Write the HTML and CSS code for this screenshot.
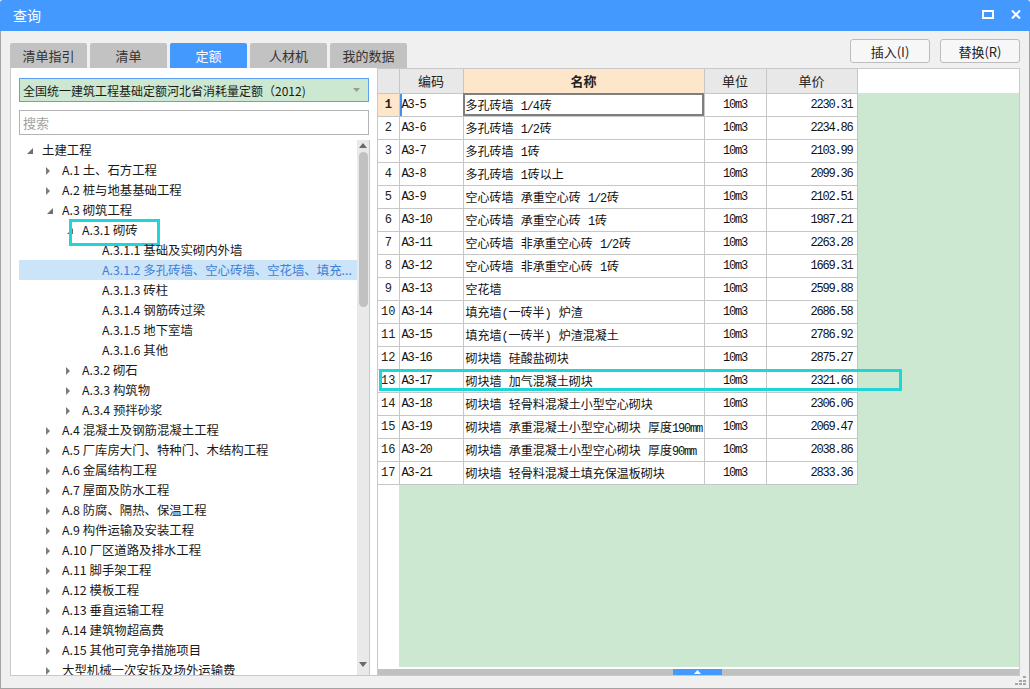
FILE: index.html
```html
<!DOCTYPE html>
<html lang="zh-CN">
<head>
<meta charset="utf-8">
<title>查询</title>
<link rel="stylesheet" href="styles.css">
</head>
<body>
<div class="window">
  <div class="titlebar">
    <span class="title">查询</span>
    <div class="tb-icons">
      <svg class="ico-max" width="12" height="9" viewBox="0 0 12 9"><rect x="1" y="1" width="10" height="7" fill="none" stroke="#fff" stroke-width="2"/></svg>
      <svg class="ico-close" width="10" height="9" viewBox="0 0 10 9"><path d="M1 0.5 L9 8.5 M9 0.5 L1 8.5" stroke="#fff" stroke-width="2"/></svg>
    </div>
  </div>
  <div class="body">
    <div class="topbar">
      <div class="tabs">
        <div class="tab">清单指引</div>
        <div class="tab">清单</div>
        <div class="tab active">定额</div>
        <div class="tab">人材机</div>
        <div class="tab">我的数据</div>
      </div>
      <div class="actions">
        <button class="btn">插入(I)</button>
        <button class="btn">替换(R)</button>
      </div>
    </div>
    <div class="main">
      <div class="leftpanel">
        <div class="combo">
          <span class="combo-text">全国统一建筑工程基础定额河北省消耗量定额（2012)</span>
          <svg class="combo-arrow" width="7" height="4" viewBox="0 0 7 4"><polygon points="0,0 7,0 3.5,4" fill="#9a9a9a"/></svg>
        </div>
        <div class="search">搜索</div>
        <div class="treebox">
          <div class="tree">
            <div class="node l0"><i class="tw"><svg width="6" height="6" viewBox="0 0 6 6"><polygon points="6,0 6,6 0,6" fill="#6e6e6e"/></svg></i><span class="lbl">土建工程</span></div>
            <div class="node l1"><i class="tw c"><svg width="5" height="8" viewBox="0 0 5 8"><polygon points="0,0 4,4 0,8" fill="#7c7c7c"/></svg></i><span class="lbl">A.1 土、石方工程</span></div>
            <div class="node l1"><i class="tw c"><svg width="5" height="8" viewBox="0 0 5 8"><polygon points="0,0 4,4 0,8" fill="#7c7c7c"/></svg></i><span class="lbl">A.2 桩与地基基础工程</span></div>
            <div class="node l1"><i class="tw"><svg width="6" height="6" viewBox="0 0 6 6"><polygon points="6,0 6,6 0,6" fill="#6e6e6e"/></svg></i><span class="lbl">A.3 砌筑工程</span></div>
            <div class="node l2 boxed"><i class="tw"><svg width="6" height="6" viewBox="0 0 6 6"><polygon points="6,0 6,6 0,6" fill="#6e6e6e"/></svg></i><span class="lbl">A.3.1 砌砖</span></div>
            <div class="node l3"><i class="tw"></i><span class="lbl">A.3.1.1 基础及实砌内外墙</span></div>
            <div class="node l3 selected"><i class="tw"></i><span class="lbl">A.3.1.2 多孔砖墙、空心砖墙、空花墙、填充...</span></div>
            <div class="node l3"><i class="tw"></i><span class="lbl">A.3.1.3 砖柱</span></div>
            <div class="node l3"><i class="tw"></i><span class="lbl">A.3.1.4 钢筋砖过梁</span></div>
            <div class="node l3"><i class="tw"></i><span class="lbl">A.3.1.5 地下室墙</span></div>
            <div class="node l3"><i class="tw"></i><span class="lbl">A.3.1.6 其他</span></div>
            <div class="node l2"><i class="tw c"><svg width="5" height="8" viewBox="0 0 5 8"><polygon points="0,0 4,4 0,8" fill="#7c7c7c"/></svg></i><span class="lbl">A.3.2 砌石</span></div>
            <div class="node l2"><i class="tw c"><svg width="5" height="8" viewBox="0 0 5 8"><polygon points="0,0 4,4 0,8" fill="#7c7c7c"/></svg></i><span class="lbl">A.3.3 构筑物</span></div>
            <div class="node l2"><i class="tw c"><svg width="5" height="8" viewBox="0 0 5 8"><polygon points="0,0 4,4 0,8" fill="#7c7c7c"/></svg></i><span class="lbl">A.3.4 预拌砂浆</span></div>
            <div class="node l1"><i class="tw c"><svg width="5" height="8" viewBox="0 0 5 8"><polygon points="0,0 4,4 0,8" fill="#7c7c7c"/></svg></i><span class="lbl">A.4 混凝土及钢筋混凝土工程</span></div>
            <div class="node l1"><i class="tw c"><svg width="5" height="8" viewBox="0 0 5 8"><polygon points="0,0 4,4 0,8" fill="#7c7c7c"/></svg></i><span class="lbl">A.5 厂库房大门、特种门、木结构工程</span></div>
            <div class="node l1"><i class="tw c"><svg width="5" height="8" viewBox="0 0 5 8"><polygon points="0,0 4,4 0,8" fill="#7c7c7c"/></svg></i><span class="lbl">A.6 金属结构工程</span></div>
            <div class="node l1"><i class="tw c"><svg width="5" height="8" viewBox="0 0 5 8"><polygon points="0,0 4,4 0,8" fill="#7c7c7c"/></svg></i><span class="lbl">A.7 屋面及防水工程</span></div>
            <div class="node l1"><i class="tw c"><svg width="5" height="8" viewBox="0 0 5 8"><polygon points="0,0 4,4 0,8" fill="#7c7c7c"/></svg></i><span class="lbl">A.8 防腐、隔热、保温工程</span></div>
            <div class="node l1"><i class="tw c"><svg width="5" height="8" viewBox="0 0 5 8"><polygon points="0,0 4,4 0,8" fill="#7c7c7c"/></svg></i><span class="lbl">A.9 构件运输及安装工程</span></div>
            <div class="node l1"><i class="tw c"><svg width="5" height="8" viewBox="0 0 5 8"><polygon points="0,0 4,4 0,8" fill="#7c7c7c"/></svg></i><span class="lbl">A.10 厂区道路及排水工程</span></div>
            <div class="node l1"><i class="tw c"><svg width="5" height="8" viewBox="0 0 5 8"><polygon points="0,0 4,4 0,8" fill="#7c7c7c"/></svg></i><span class="lbl">A.11 脚手架工程</span></div>
            <div class="node l1"><i class="tw c"><svg width="5" height="8" viewBox="0 0 5 8"><polygon points="0,0 4,4 0,8" fill="#7c7c7c"/></svg></i><span class="lbl">A.12 模板工程</span></div>
            <div class="node l1"><i class="tw c"><svg width="5" height="8" viewBox="0 0 5 8"><polygon points="0,0 4,4 0,8" fill="#7c7c7c"/></svg></i><span class="lbl">A.13 垂直运输工程</span></div>
            <div class="node l1"><i class="tw c"><svg width="5" height="8" viewBox="0 0 5 8"><polygon points="0,0 4,4 0,8" fill="#7c7c7c"/></svg></i><span class="lbl">A.14 建筑物超高费</span></div>
            <div class="node l1"><i class="tw c"><svg width="5" height="8" viewBox="0 0 5 8"><polygon points="0,0 4,4 0,8" fill="#7c7c7c"/></svg></i><span class="lbl">A.15 其他可竞争措施项目</span></div>
            <div class="node l1"><i class="tw c"><svg width="5" height="8" viewBox="0 0 5 8"><polygon points="0,0 4,4 0,8" fill="#7c7c7c"/></svg></i><span class="lbl">大型机械一次安拆及场外运输费</span></div>
          </div>
          <div class="vscroll">
            <svg class="vs-up" width="8" height="5" viewBox="0 0 8 5"><polygon points="4,0 8,5 0,5" fill="#6a6a6a"/></svg>
            <div class="vs-thumb"></div>
            <svg class="vs-down" width="8" height="5" viewBox="0 0 8 5"><polygon points="0,0 8,0 4,5" fill="#6a6a6a"/></svg>
          </div>
        </div>
      </div>
      <div class="rightpane">
        <div class="grid">
          <table class="sheet">
            <colgroup><col class="c-no"><col class="c-code"><col class="c-name"><col class="c-unit"><col class="c-price"></colgroup>
            <thead>
              <tr><th class="no"></th><th>编码</th><th class="hl">名称</th><th>单位</th><th>单价</th></tr>
            </thead>
            <tbody>
              <tr class="cur"><td class="no">1</td><td class="code">A3-5</td><td class="name">多孔砖墙 <span class="a">1/4</span>砖</td><td class="unit">10m3</td><td class="price">2230.31</td></tr>
              <tr><td class="no">2</td><td class="code">A3-6</td><td class="name">多孔砖墙 <span class="a">1/2</span>砖</td><td class="unit">10m3</td><td class="price">2234.86</td></tr>
              <tr><td class="no">3</td><td class="code">A3-7</td><td class="name">多孔砖墙 <span class="a">1</span>砖</td><td class="unit">10m3</td><td class="price">2103.99</td></tr>
              <tr><td class="no">4</td><td class="code">A3-8</td><td class="name">多孔砖墙 <span class="a">1</span>砖以上</td><td class="unit">10m3</td><td class="price">2099.36</td></tr>
              <tr><td class="no">5</td><td class="code">A3-9</td><td class="name">空心砖墙 承重空心砖 <span class="a">1/2</span>砖</td><td class="unit">10m3</td><td class="price">2102.51</td></tr>
              <tr><td class="no">6</td><td class="code">A3-10</td><td class="name">空心砖墙 承重空心砖 <span class="a">1</span>砖</td><td class="unit">10m3</td><td class="price">1987.21</td></tr>
              <tr><td class="no">7</td><td class="code">A3-11</td><td class="name">空心砖墙 非承重空心砖 <span class="a">1/2</span>砖</td><td class="unit">10m3</td><td class="price">2263.28</td></tr>
              <tr><td class="no">8</td><td class="code">A3-12</td><td class="name">空心砖墙 非承重空心砖 <span class="a">1</span>砖</td><td class="unit">10m3</td><td class="price">1669.31</td></tr>
              <tr><td class="no">9</td><td class="code">A3-13</td><td class="name">空花墙</td><td class="unit">10m3</td><td class="price">2599.88</td></tr>
              <tr><td class="no">10</td><td class="code">A3-14</td><td class="name">填充墙<span class="a">(</span>一砖半<span class="a">)</span> 炉渣</td><td class="unit">10m3</td><td class="price">2686.58</td></tr>
              <tr><td class="no">11</td><td class="code">A3-15</td><td class="name">填充墙<span class="a">(</span>一砖半<span class="a">)</span> 炉渣混凝土</td><td class="unit">10m3</td><td class="price">2786.92</td></tr>
              <tr><td class="no">12</td><td class="code">A3-16</td><td class="name">砌块墙 硅酸盐砌块</td><td class="unit">10m3</td><td class="price">2875.27</td></tr>
              <tr><td class="no">13</td><td class="code">A3-17</td><td class="name">砌块墙 加气混凝土砌块</td><td class="unit">10m3</td><td class="price">2321.66</td></tr>
              <tr><td class="no">14</td><td class="code">A3-18</td><td class="name">砌块墙 轻骨料混凝土小型空心砌块</td><td class="unit">10m3</td><td class="price">2306.06</td></tr>
              <tr><td class="no">15</td><td class="code">A3-19</td><td class="name">砌块墙 承重混凝土小型空心砌块 厚度<span class="a">190mm</span></td><td class="unit">10m3</td><td class="price">2069.47</td></tr>
              <tr><td class="no">16</td><td class="code">A3-20</td><td class="name">砌块墙 承重混凝土小型空心砌块 厚度<span class="a">90mm</span></td><td class="unit">10m3</td><td class="price">2038.86</td></tr>
              <tr><td class="no">17</td><td class="code">A3-21</td><td class="name">砌块墙 轻骨料混凝土填充保温板砌块</td><td class="unit">10m3</td><td class="price">2833.36</td></tr>
            </tbody>
          </table>
          <div class="rowmark"></div>
        </div>
        <div class="hgap"></div>
        <div class="hscroll"><div class="hs-thumb"><svg width="7" height="4" viewBox="0 0 7 4"><polygon points="3.5,0 7,4 0,4" fill="#fff"/></svg></div></div>
      </div>
    </div>
    <div class="bottom">
      <svg class="grip" width="12" height="10" viewBox="0 0 12 10"><rect x="8" y="0" width="3" height="2" fill="#a6a6a6"/><rect x="4" y="4" width="3" height="2" fill="#a6a6a6"/><rect x="8" y="4" width="3" height="2" fill="#a6a6a6"/><rect x="0" y="7" width="3" height="2" fill="#a6a6a6"/><rect x="4" y="7" width="3" height="2" fill="#a6a6a6"/><rect x="8" y="7" width="3" height="2" fill="#a6a6a6"/></svg>
    </div>
  </div>
</div>
</body>
</html>
```

FILE: styles.css
```css
* { box-sizing: border-box; }
html, body { margin: 0; padding: 0; }
body {
  width: 1030px;
  height: 689px;
  overflow: hidden;
  background: #f0f0f0;
  font-family: "Noto Sans CJK SC", "Microsoft YaHei", sans-serif;
  font-size: 13px;
  color: #1e1e1e;
}
.window {
  width: 1030px;
  height: 689px;
  display: flex;
  flex-direction: column;
}
.titlebar {
  height: 31px;
  flex: none;
  background: #4499ff;
  color: #fff;
  display: flex;
  align-items: center;
  padding: 0 9px 0 13px;
  border-radius: 3px 3px 0 0;
}
.title { font-size: 14px; line-height: 20px; margin-top: -1px; }
.tb-icons { margin-left: auto; display: flex; align-items: center; gap: 17px; margin-top: -2px; }
.body {
  flex: 1;
  display: flex;
  flex-direction: column;
  border: 1px solid #a3a3a3;
  border-top: none;
  background: #f0f0f0;
}
.topbar {
  height: 37px;
  flex: none;
  display: flex;
  align-items: flex-end;
  padding: 0 9px;
}
.tabs { display: flex; gap: 3px; }
.tab {
  width: 77px;
  height: 25px;
  background: #c2c2c2;
  color: #333;
  text-align: center;
  line-height: 25px;
  font-size: 13px;
  border-radius: 2px 2px 0 0;
}
.tab.active { background: #4499ff; color: #fff; }
.actions { margin-left: auto; display: flex; gap: 10px; margin-bottom: 5px; }
.btn {
  width: 80px;
  height: 24px;
  background: #f7f7f7;
  border: 1px solid #bcbcbc;
  border-radius: 3px;
  font-family: "Noto Sans CJK SC", sans-serif;
  font-size: 13px;
  color: #222;
  padding: 0;
  line-height: 21px;
}
.main {
  height: 608px;
  flex: none;
  display: flex;
  margin: 0 9px;
}
.leftpanel {
  width: 367px;
  flex: none;
  background: #fff;
  border-left: 1px solid #c9c9c9;
  border-bottom: 1px solid #c9c9c9;
  padding: 10px 0 0 8px;
  display: flex;
  flex-direction: column;
}
.combo {
  width: 350px;
  height: 24px;
  flex: none;
  background: #cde8d0;
  border: 1px solid #5d9ff0;
  display: flex;
  align-items: center;
  padding: 0 8px 0 3px;
}
.combo-text { font-size: 12px; color: #1a1a1a; white-space: nowrap; }
.combo-arrow { margin-left: auto; }
.search {
  width: 350px;
  height: 25px;
  flex: none;
  margin-top: 8px;
  border: 1px solid #b3b3b3;
  color: #a3a3a3;
  font-size: 13px;
  line-height: 23px;
  padding-left: 3px;
}
.treebox {
  width: 351px;
  flex: 1;
  min-height: 0;
  margin-top: 5px;
  display: flex;
  border-right: 1px solid #c9c9c9;
  overflow: hidden;
}
.tree { width: 338px; flex: none; overflow: hidden; }
.node {
  height: 20px;
  display: flex;
  align-items: center;
  white-space: nowrap;
  position: relative;
  font-size: 12.4px;
  color: #1a1a1a;
}
.node.l0 { padding-left: 3px; }
.node.l1 { padding-left: 23px; }
.node.l2 { padding-left: 43px; }
.node.l3 { padding-left: 63px; }
.tw {
  width: 20px;
  height: 20px;
  flex: none;
  display: flex;
  align-items: center;
  padding-left: 5px;
  padding-top: 1px;
}
.tw.c { padding-left: 4px; }
.lbl { overflow: hidden; text-overflow: ellipsis; min-width: 0; line-height: 20px; }
.node.selected { background: #cce4f7; color: #3d7fd9; }
.node.boxed::after {
  content: "";
  position: absolute;
  left: 50px;
  top: -1px;
  width: 85px;
  height: 21px;
  border: 3px solid #1fd5d5;
}
.vscroll {
  width: 12px;
  flex: none;
  background: #e9e9e9;
  position: relative;
  display: flex;
  flex-direction: column;
  align-items: center;
}
.vs-up { margin-top: 3px; flex: none; }
.vs-thumb {
  width: 9px;
  height: 155px;
  margin-top: 4px;
  background: #c1c1c1;
  border-radius: 5px;
  flex: none;
}
.vs-down { margin-top: auto; margin-bottom: 8px; flex: none; }
.rightpane {
  flex: 1;
  min-width: 0;
  background: #fff;
  border: 1px solid #c9c9c9;
  display: flex;
  flex-direction: column;
}
.grid {
  flex: 1;
  min-height: 0;
  position: relative;
  overflow: hidden;
  background: linear-gradient(#cde8d0, #cde8d0) 21px 24px / calc(100% - 21px) calc(100% - 24px) no-repeat, #fff;
}
.sheet {
  border-collapse: collapse;
  table-layout: fixed;
  width: 479px;
  font-family: "Liberation Mono", "Noto Sans CJK SC", monospace;
  font-size: 12px;
  color: #111;
}
.c-no { width: 21px; }
.c-code { width: 64px; }
.c-name { width: 241px; }
.c-unit { width: 62px; }
.c-price { width: 91px; }
.sheet th, .sheet td {
  border: 1px solid #c6c6c6;
  height: 23px;
  padding: 0 2px;
  white-space: nowrap;
  overflow: hidden;
  background: #fff;
}
.sheet tr > :first-child { border-left: none; }
.sheet thead th {
  border-top: none;
  background: #e8e8e8;
  font-family: "Noto Sans CJK SC", sans-serif;
  font-weight: normal;
  font-size: 13px;
  color: #222;
  height: 24px;
}
.sheet thead th.hl { background: #fde6c9; font-weight: bold; }
.sheet td.no { text-align: center; padding: 0; color: #222; }
.sheet td.code, .sheet td.price, .sheet td.unit, .sheet .a { letter-spacing: -1.2px; }
.sheet .a { margin-right: 1px; }
.sheet td.unit { text-align: center; }
.sheet td.price { text-align: right; padding-right: 4px; }
.sheet tr.cur td.no { background: #fde6c9; font-weight: bold; }
.sheet tr.cur td.code { box-shadow: inset 2px 0 0 #3f90f2; }
.sheet tr.cur td.name { outline: 2px solid #7e7e7e; outline-offset: -2px; }
.rowmark {
  position: absolute;
  left: 1px;
  top: 300px;
  width: 523px;
  height: 22px;
  border: 3px solid #1fd5d5;
}
.hgap { height: 2px; flex: none; background: #fff; }
.hscroll {
  height: 6px;
  flex: none;
  background: #c0c0c0;
  position: relative;
}
.hs-thumb {
  position: absolute;
  left: 295px;
  top: 0;
  width: 49px;
  height: 6px;
  background: #4499ff;
  display: flex;
  align-items: flex-start;
  justify-content: center;
  padding-top: 1px;
}
.hs-thumb svg { display: block; }
.bottom {
  flex: 1;
  display: flex;
  justify-content: flex-end;
  align-items: flex-end;
  padding: 0 2px 2px 0;
}
```
